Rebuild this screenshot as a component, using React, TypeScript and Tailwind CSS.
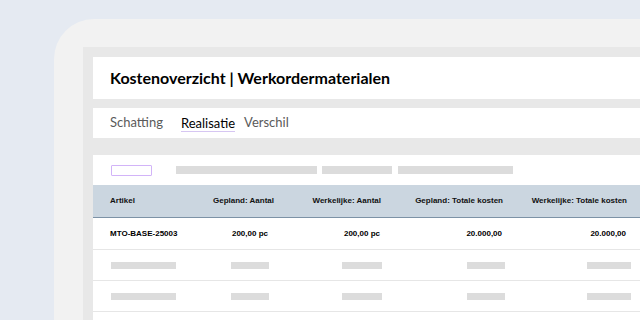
const cols = 'grid grid-cols-[95px_98px_111px_123px_124px]';

function Bar({ w }: { w: string }) {
  return <div className={`h-[7px] ${w} bg-[#dcdcdc]`} />;
}

export default function App() {
  return (
    <div className="w-[640px] h-[320px] overflow-hidden bg-[#e5eaf2] pl-[54px] pt-[19px] font-['Liberation_Sans',sans-serif]">
      {/* outer frame */}
      <div className="w-[700px] h-[400px] bg-[#f2f2f2] rounded-tl-[40px] pl-[29px] pt-[28px]">
        {/* inner panel */}
        <div className="h-full bg-[#e8e8e8] pl-[10px] pt-[10px] flex flex-col">
          <div className="h-[42px] bg-white flex items-center pl-[17px]">
            <h1 className="text-[16px] font-bold text-black font-['Lato',sans-serif]">
              Kostenoverzicht | Werkordermaterialen
            </h1>
          </div>

          <div className="mt-[9px] h-[30px] bg-white flex items-center pl-[17px] gap-[18px] text-[13px] font-['Lato',sans-serif]">
            <span className="text-[#5a5a5a]">Schatting</span>
            <span className="text-black border-b border-[#d6c6f2] leading-[16px] pt-[1px]">Realisatie</span>
            <span className="text-[#5a5a5a] -ml-[9px]">Verschil</span>
          </div>

          <div className="mt-[17px] bg-white flex-1">
            {/* toolbar */}
            <div className="h-[30px] flex items-center pl-[18px]">
              <div className="w-[41px] h-[11px] border border-[#d2b4f8] rounded-[1px]" />
              <div className="ml-[24px] w-[141px] h-[8px] bg-[#dcdcdc]" />
              <div className="ml-[5px] w-[70px] h-[8px] bg-[#dcdcdc]" />
              <div className="ml-[6px] w-[115px] h-[8px] bg-[#dcdcdc]" />
            </div>

            {/* header */}
            <div className={`${cols} h-[33px] bg-[#cbd6e0] border-b border-[#7d92a6] items-center text-[8px] font-bold text-[#111]`}>
              <div className="pl-[17px]">Artikel</div>
              <div className="text-right pr-[12px]">Gepland: Aantal</div>
              <div className="text-right pr-[16px]">Werkelijke: Aantal</div>
              <div className="text-right pr-[17px]">Gepland: Totale kosten</div>
              <div className="text-right pr-[17px]">Werkelijke: Totale kosten</div>
            </div>

            {/* row 1 */}
            <div className={`${cols} h-[32px] border-b border-[#e6e6e6] items-center text-[8px] font-bold text-black`}>
              <div className="pl-[17px] whitespace-nowrap">MTO-BASE-25003</div>
              <div className="text-right pr-[18px]">200,00 pc</div>
              <div className="text-right pr-[17px]">200,00 pc</div>
              <div className="text-right pr-[18px]">20.000,00</div>
              <div className="text-right pr-[18px]">20.000,00</div>
            </div>

            {[0, 1].map((i) => (
              <div key={i} className={`${cols} h-[31px] border-b border-[#e6e6e6] items-center`}>
                <div className="pl-[18px]"><Bar w="w-[65px]" /></div>
                <div className="flex justify-end pr-[17px]"><Bar w="w-[38px]" /></div>
                <div className="flex justify-end pr-[15px]"><Bar w="w-[40px]" /></div>
                <div className="flex justify-end pr-[15px]"><Bar w="w-[38px]" /></div>
                <div className="flex justify-end pr-[13px]"><Bar w="w-[44px]" /></div>
              </div>
            ))}
          </div>
        </div>
      </div>
    </div>
  );
}
